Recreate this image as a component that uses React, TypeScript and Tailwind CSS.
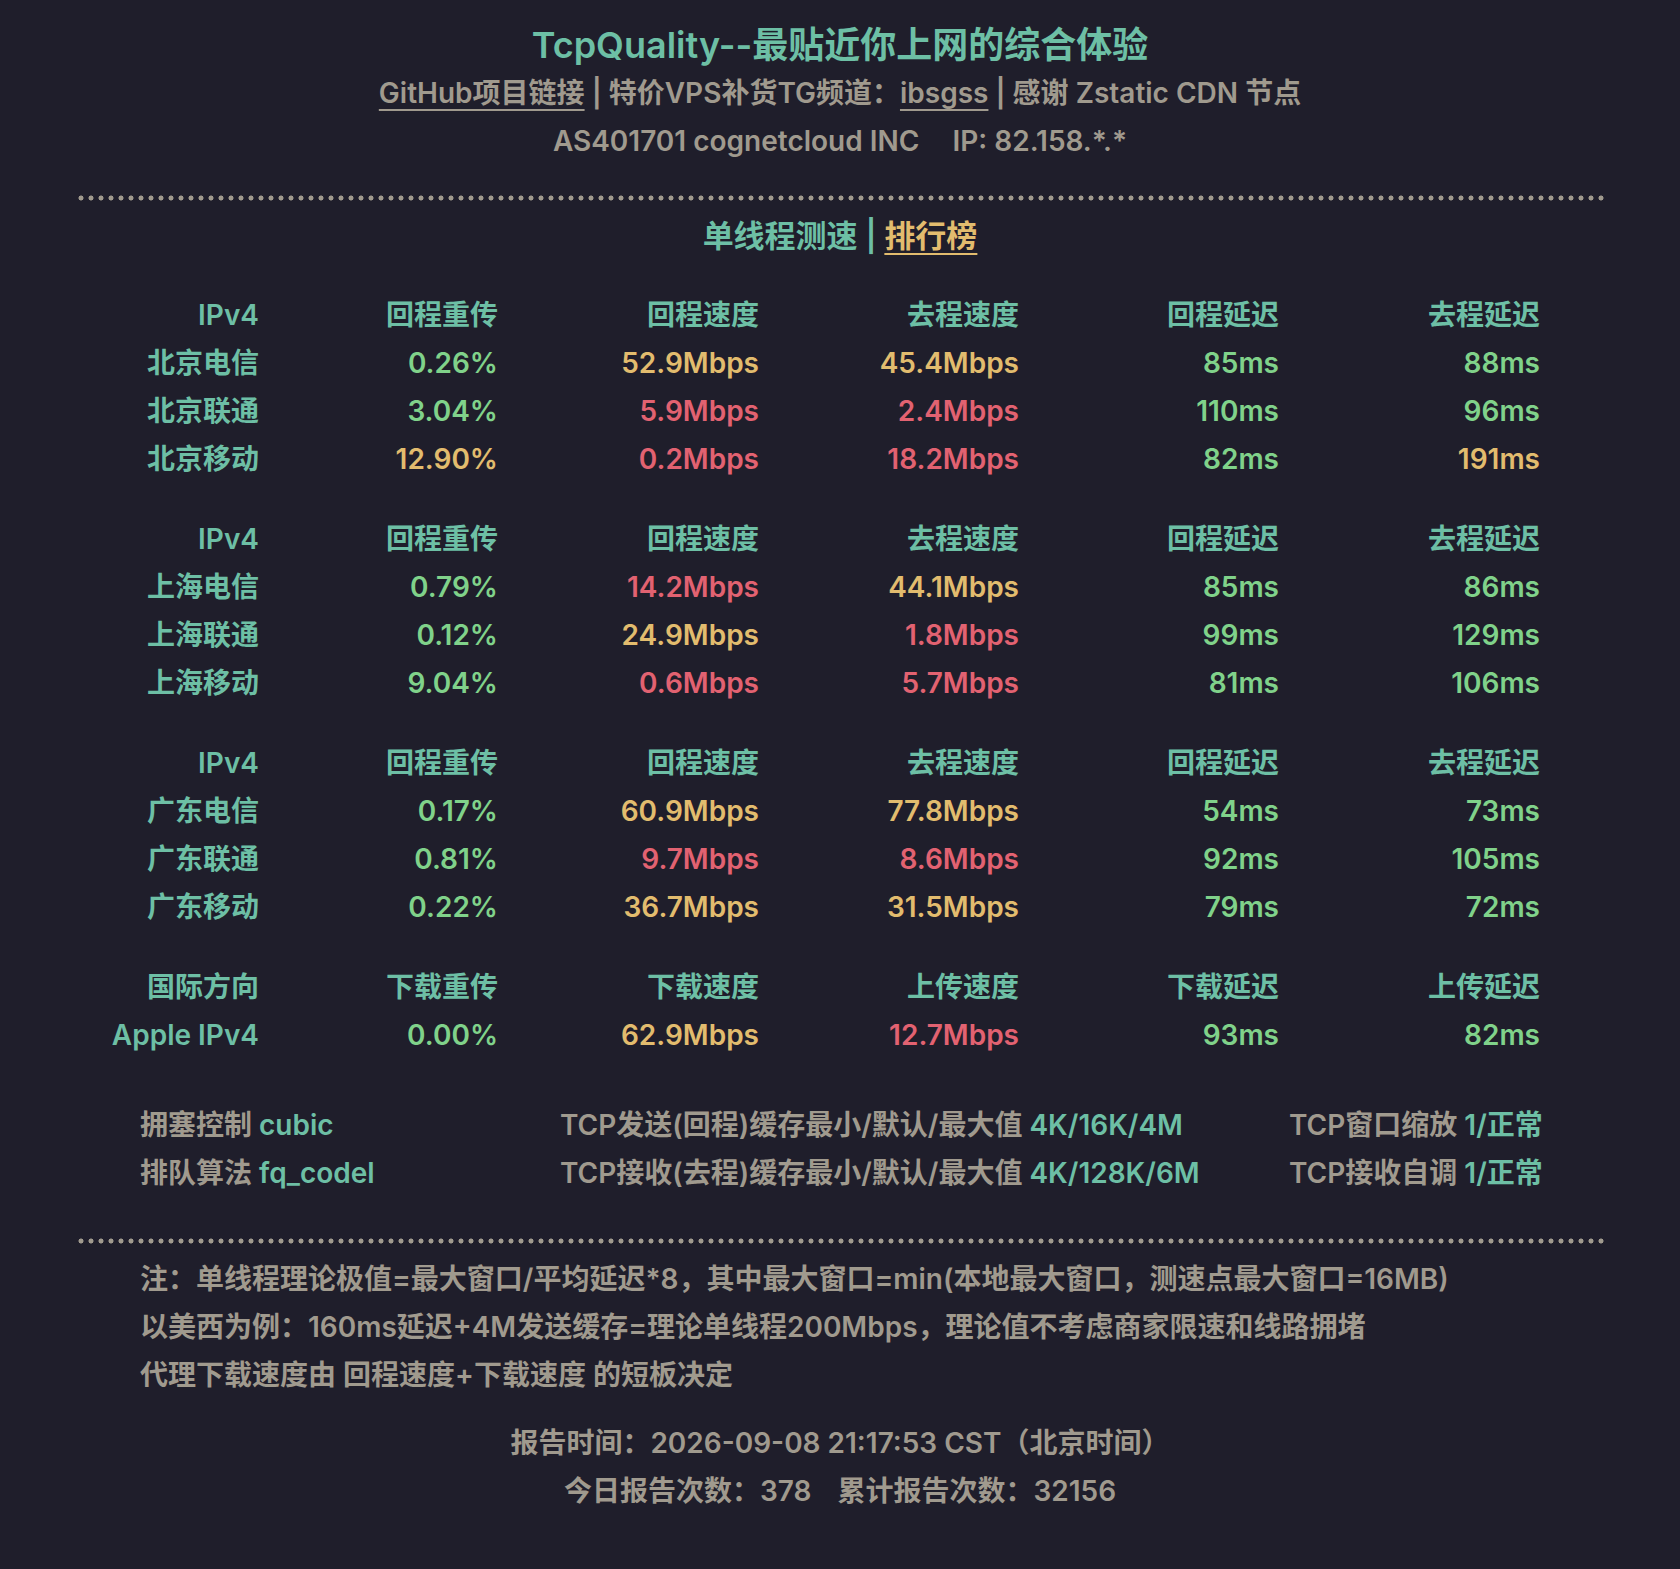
import React from "react";

type C = "g" | "y" | "r";
const col: Record<C, string> = {
  g: "text-[#80d28a]",
  y: "text-[#e2bc6e]",
  r: "text-[#e26271]",
};

type Row = { name: string; cells: [string, C][] };
type Group = { head: string[]; rows: Row[] };

const groups: Group[] = [
  {
    head: ["IPv4", "回程重传", "回程速度", "去程速度", "回程延迟", "去程延迟"],
    rows: [
      { name: "北京电信", cells: [["0.26%", "g"], ["52.9Mbps", "y"], ["45.4Mbps", "y"], ["85ms", "g"], ["88ms", "g"]] },
      { name: "北京联通", cells: [["3.04%", "g"], ["5.9Mbps", "r"], ["2.4Mbps", "r"], ["110ms", "g"], ["96ms", "g"]] },
      { name: "北京移动", cells: [["12.90%", "y"], ["0.2Mbps", "r"], ["18.2Mbps", "r"], ["82ms", "g"], ["191ms", "y"]] },
    ],
  },
  {
    head: ["IPv4", "回程重传", "回程速度", "去程速度", "回程延迟", "去程延迟"],
    rows: [
      { name: "上海电信", cells: [["0.79%", "g"], ["14.2Mbps", "r"], ["44.1Mbps", "y"], ["85ms", "g"], ["86ms", "g"]] },
      { name: "上海联通", cells: [["0.12%", "g"], ["24.9Mbps", "y"], ["1.8Mbps", "r"], ["99ms", "g"], ["129ms", "g"]] },
      { name: "上海移动", cells: [["9.04%", "g"], ["0.6Mbps", "r"], ["5.7Mbps", "r"], ["81ms", "g"], ["106ms", "g"]] },
    ],
  },
  {
    head: ["IPv4", "回程重传", "回程速度", "去程速度", "回程延迟", "去程延迟"],
    rows: [
      { name: "广东电信", cells: [["0.17%", "g"], ["60.9Mbps", "y"], ["77.8Mbps", "y"], ["54ms", "g"], ["73ms", "g"]] },
      { name: "广东联通", cells: [["0.81%", "g"], ["9.7Mbps", "r"], ["8.6Mbps", "r"], ["92ms", "g"], ["105ms", "g"]] },
      { name: "广东移动", cells: [["0.22%", "g"], ["36.7Mbps", "y"], ["31.5Mbps", "y"], ["79ms", "g"], ["72ms", "g"]] },
    ],
  },
  {
    head: ["国际方向", "下载重传", "下载速度", "上传速度", "下载延迟", "上传延迟"],
    rows: [
      { name: "Apple IPv4", cells: [["0.00%", "g"], ["62.9Mbps", "y"], ["12.7Mbps", "r"], ["93ms", "g"], ["82ms", "g"]] },
    ],
  },
];

const grid = "grid grid-cols-[181px_239px_261px_260px_260px_261px] text-right";

function Dots() {
  return (
    <div className="h-[10px] mx-[76px] bg-[radial-gradient(circle,#a09a8e_2.2px,transparent_2.8px)] bg-[length:10px_10px] bg-repeat-x" />
  );
}

export default function App() {
  return (
    <div
      className="min-h-screen bg-[#1f1e2b] text-[#a09a8e] font-semibold text-[28px] leading-[48px] pb-[55px]"
      style={{ fontFamily: 'Inter, "Noto Sans CJK SC", sans-serif' }}
    >
      <div className="pt-[21px] text-center">
        <div className="text-[36px] text-[#6dbfa5]">TcpQuality--最贴近你上网的综合体验</div>
        <div>
          <span className="underline underline-offset-[6px] decoration-2">GitHub项目链接</span>
          <span> | 特价VPS补货TG频道：</span>
          <span className="underline underline-offset-[6px] decoration-2">ibsgss</span>
          <span> | 感谢 Zstatic CDN 节点</span>
        </div>
        <div>
          AS401701 cognetcloud INC<span className="inline-block w-[26px]" /> IP: 82.158.*.*
        </div>
      </div>

      <div className="mt-[28px]">
        <Dots />
      </div>

      <div className="mt-[9px] text-center text-[31px] text-[#6dbfa5]">
        单线程测速 |{" "}
        <span className="text-[#e2bc6e] underline underline-offset-[6px] decoration-2">排行榜</span>
      </div>

      <div className="mt-[31px] pl-[78px] flex flex-col gap-[32px]">
        {groups.map((g, gi) => (
          <div key={gi}>
            <div className={`${grid} text-[#6dbfa5]`}>
              {g.head.map((h) => (
                <div key={h}>{h}</div>
              ))}
            </div>
            {g.rows.map((r) => (
              <div key={r.name} className={grid}>
                <div className="text-[#6dbfa5] whitespace-nowrap">{r.name}</div>
                {r.cells.map(([v, c], i) => (
                  <div key={i} className={col[c]}>
                    {v}
                  </div>
                ))}
              </div>
            ))}
          </div>
        ))}
      </div>

      <div className="mt-[42px] pl-[140px] grid grid-cols-[420px_729px_auto]">
        <div>
          拥塞控制 <span className="text-[#6dbfa5]">cubic</span>
        </div>
        <div>
          TCP发送(回程)缓存最小/默认/最大值 <span className="text-[#6dbfa5]">4K/16K/4M</span>
        </div>
        <div>
          TCP窗口缩放 <span className="text-[#6dbfa5]">1/正常</span>
        </div>
        <div>
          排队算法 <span className="text-[#6dbfa5]">fq_codel</span>
        </div>
        <div>
          TCP接收(去程)缓存最小/默认/最大值 <span className="text-[#6dbfa5]">4K/128K/6M</span>
        </div>
        <div>
          TCP接收自调 <span className="text-[#6dbfa5]">1/正常</span>
        </div>
      </div>

      <div className="mt-[39px]">
        <Dots />
      </div>

      <div className="mt-[9px] pl-[140px]">
        <div>注：单线程理论极值=最大窗口/平均延迟*8，其中最大窗口=min(本地最大窗口，测速点最大窗口=16MB)</div>
        <div>以美西为例：160ms延迟+4M发送缓存=理论单线程200Mbps，理论值不考虑商家限速和线路拥堵</div>
        <div>代理下载速度由 回程速度+下载速度 的短板决定</div>
      </div>

      <div className="mt-[20px] text-center">
        <div>报告时间：2026-09-08 21:17:53 CST（北京时间）</div>
        <div>
          今日报告次数：378<span className="inline-block w-[26px]" />累计报告次数：32156
        </div>
      </div>
    </div>
  );
}
